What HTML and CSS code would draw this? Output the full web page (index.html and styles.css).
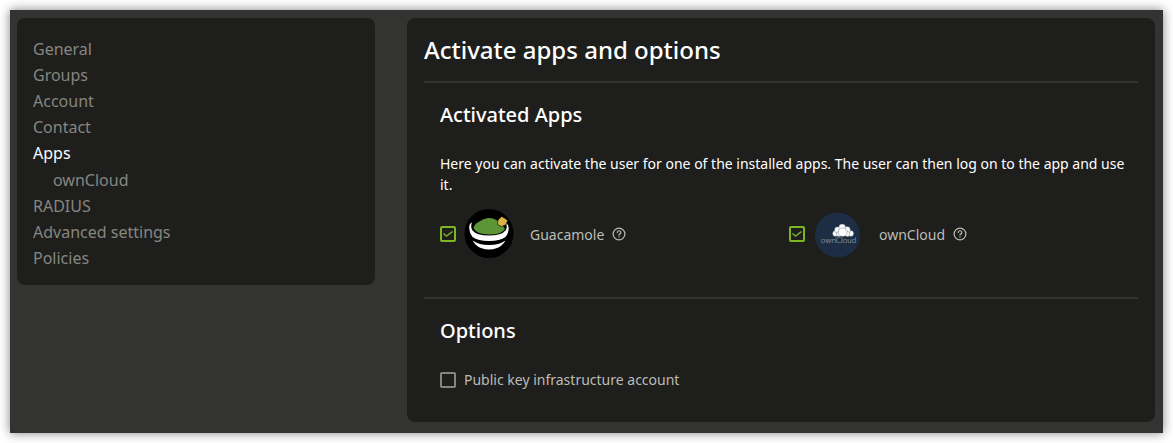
FILE: index.html
```html
<!DOCTYPE html>
<html lang="en">
<head>
<meta charset="utf-8">
<title>Activate apps and options</title>
<link rel="stylesheet" href="styles.css">
</head>
<body>
<div class="window">
  <nav class="card sidebar" aria-label="User settings">
    <ul class="nav-list">
      <li><a class="nav-link" href="#general">General</a></li>
      <li><a class="nav-link" href="#groups">Groups</a></li>
      <li><a class="nav-link" href="#account">Account</a></li>
      <li><a class="nav-link" href="#contact">Contact</a></li>
      <li><a class="nav-link nav-link--active" href="#apps" aria-current="page">Apps</a></li>
      <li><a class="nav-link nav-link--sub" href="#owncloud">ownCloud</a></li>
      <li><a class="nav-link" href="#radius">RADIUS</a></li>
      <li><a class="nav-link" href="#advanced">Advanced settings</a></li>
      <li><a class="nav-link" href="#policies">Policies</a></li>
    </ul>
  </nav>
  <main class="card content">
    <h1 class="title">Activate apps and options</h1>
    <section class="section section--apps">
      <h2 class="heading">Activated Apps</h2>
      <p class="description">Here you can activate the user for one of the installed apps. The user can then log on to the app and use it.</p>
      <div class="apps">
        <div class="app">
          <input class="checkbox" type="checkbox" id="guacamole" checked>
          <label class="app-label" for="guacamole">
            <span class="app-icon">
              <svg width="50" height="50" viewBox="0 0 50 50" aria-hidden="true">
                <circle cx="25" cy="24.500" r="24.5" fill="#000"/>
                <path d="M9.500 19 Q10.500 14.500 15.500 12.500 Q19 9.500 24 9 Q30 8.500 33 11.500 L37 14 L41 20 Q38 25.500 25 25.500 Q12.500 25.500 9.500 19Z" fill="#5b9536"/>
                <path d="M34 11 L37.500 7.500 L40.500 9 L43.800 11.500 L41.500 16 L37.500 17.500 L33.500 15.500Z" fill="#dab343" stroke="#000" stroke-width=".6"/>
                <path d="M8 13.500 Q5 14.500 5.200 19 Q5.500 24.500 8.500 28 Q14 32 25 32 Q36 32 41.500 28 Q44.500 24.500 44.700 19 Q44.600 15.500 42 14 Q43.800 18.500 41.500 21.500 Q37.500 26.500 25 26.500 Q12.500 26.500 8.500 21.500 Q6.200 18 8 13.500Z" fill="#fff"/>
                <path d="M8.500 31.500 Q15 36 25 36 Q35 36 41.500 31.500 Q38 37.500 33 39 Q25 42 17 39 Q12 37.500 8.500 31.500Z" fill="#fff"/>
              </svg>
            </span>
            <span>Guacamole</span>
          </label>
          <button class="help" type="button" aria-label="Help for Guacamole">
            <svg width="14" height="14" viewBox="0 0 14 14" fill="none" stroke="currentColor" stroke-width="1.200" stroke-linecap="round" aria-hidden="true">
              <circle cx="7" cy="7" r="5.900"/>
              <path d="M5.300 5.500 A1.750 1.750 0 1 1 7.600 7.150 Q7 7.400 7 8.100"/>
              <circle cx="7" cy="10" r=".2"/>
            </svg>
          </button>
        </div>
        <div class="app">
          <input class="checkbox" type="checkbox" id="owncloud-app" checked>
          <label class="app-label" for="owncloud-app">
            <span class="app-icon">
              <svg width="50" height="50" viewBox="0 0 50 50" aria-hidden="true">
                <circle cx="24.500" cy="26" r="22.500" fill="#1d2d44"/>
                <text class="logo-text" x="25.500" y="34" text-anchor="middle">ownCloud</text>
                <g fill="#fff" stroke="#1d2d44" stroke-width=".3">
                  <circle cx="22.500" cy="24.500" r="2.900"/>
                  <circle cx="37.800" cy="24.500" r="2.900"/>
                  <circle cx="24.700" cy="21" r="3.200"/>
                  <circle cx="34" cy="21" r="3.400"/>
                  <circle cx="29.200" cy="18.500" r="3.400"/>
                  <circle cx="26" cy="25" r="2.600"/>
                  <circle cx="34.300" cy="25" r="2.600"/>
                  <circle cx="29.700" cy="23.200" r="4.400"/>
                </g>
              </svg>
            </span>
            <span>ownCloud</span>
          </label>
          <button class="help" type="button" aria-label="Help for ownCloud">
            <svg width="14" height="14" viewBox="0 0 14 14" fill="none" stroke="currentColor" stroke-width="1.200" stroke-linecap="round" aria-hidden="true">
              <circle cx="7" cy="7" r="5.900"/>
              <path d="M5.300 5.500 A1.750 1.750 0 1 1 7.600 7.150 Q7 7.400 7 8.100"/>
              <circle cx="7" cy="10" r=".2"/>
            </svg>
          </button>
        </div>
      </div>
    </section>
    <section class="section">
      <h2 class="heading">Options</h2>
      <div class="option">
        <input class="checkbox" type="checkbox" id="pki">
        <label for="pki">Public key infrastructure account</label>
      </div>
    </section>
  </main>
</div>
</body>
</html>
```

FILE: styles.css
```css
* {
  box-sizing: border-box;
}

body {
  margin: 0;
  padding: 10px;
  background: #fff;
  color: #bcbcb6;
  font: 14px/21px "Noto Sans", "Open Sans", sans-serif;
}

.window {
  display: flex;
  align-items: flex-start;
  gap: 32px;
  padding: 8px 8px 11px 7px;
  background: #333331;
  box-shadow: 0 0 10px rgba(0, 0, 0, 0.5);
}

.card {
  background: #1e1e1c;
  border-radius: 8px;
}

.sidebar {
  flex: 0 0 358px;
  padding: 18px 16px 14px;
}

.nav-list {
  margin: 0;
  padding: 0;
  list-style: none;
}

.nav-link {
  display: block;
  color: #868680;
  font-size: 16px;
  line-height: 26px;
  text-decoration: none;
}

.nav-link--active {
  color: #fff;
}

.nav-link--sub {
  padding: 1px 0 0 20px;
}

.content {
  flex: 1;
  min-width: 0;
  padding: 16px 17px 32px;
}

.title,
.heading {
  margin: 0;
  color: #fff;
  font-weight: 500;
}

.title {
  margin-bottom: 15px;
  font-size: 24px;
  line-height: 32px;
}

.section {
  padding: 19px 8px 0 16px;
  border-top: 2px solid #333331;
}

.section--apps {
  padding-bottom: 38px;
}

.heading {
  font-size: 20px;
  line-height: 26px;
}

.description {
  margin: 25px 0 14px;
  color: #fff;
}

.apps {
  display: grid;
  grid-template-columns: 1fr 1fr;
  gap: 8px;
}

.app,
.app-label,
.option {
  display: flex;
  align-items: center;
}

.app-icon {
  display: flex;
  margin: 0 16px 0 8px;
}

.logo-text {
  fill: #c5cad2;
  font: 300 8px Lato, sans-serif;
}

.checkbox {
  display: grid;
  place-items: center;
  width: 16px;
  height: 16px;
  margin: 0;
  border: 2px solid #868680;
  border-radius: 2px;
  appearance: none;
}

.checkbox:checked {
  border-color: #7db523;
}

.checkbox:checked::before {
  content: "";
  width: 10px;
  height: 6px;
  background: #7db523;
  clip-path: polygon(0 50%, 10% 33%, 35% 70%, 90% 0, 100% 15%, 35% 100%);
}

.help {
  display: flex;
  margin: 0 0 0 8px;
  padding: 0;
  border: 0;
  background: none;
  color: #bcbcb6;
}

.option {
  gap: 8px;
  margin-top: 25px;
}
```
